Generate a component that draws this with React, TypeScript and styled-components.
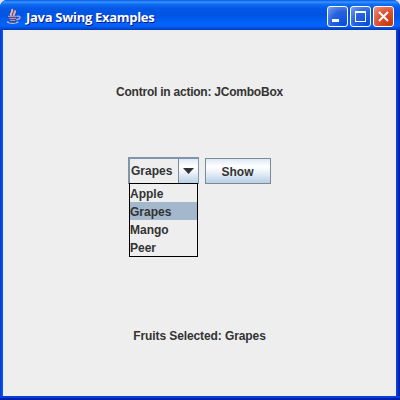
import React from "react";
import styled, { createGlobalStyle } from "styled-components";

const GlobalStyle = createGlobalStyle`
  * { box-sizing: border-box; }
  html, body { margin: 0; padding: 0; }
  body { background: #dfe3ee; overflow: hidden; }
`;

const Frame = styled.main`
  width: 400px;
  height: 400px;
  display: flex;
  flex-direction: column;
  padding: 0 4px 4px 3px;
  border-radius: 7px 7px 0 0;
  overflow: hidden;
  background: linear-gradient(90deg, #0831d9 0, #0855ea 2px, #0a55ea 50%, #0a3fd0 calc(100% - 3px), #0016a8 100%);
  box-shadow: inset 0 -2px 0 #0020b0, inset 0 -4px 0 #0740d8;
  font: bold 12px/18px "Liberation Sans", Arial, sans-serif;
  color: #333;
`;

const TitleBar = styled.header`
  flex: 0 0 30px;
  margin: 0 -4px 0 -3px;
  padding: 3px 6px 0 6px;
  display: flex;
  align-items: center;
  background: linear-gradient(180deg, #0058e6 0, #3a93ff 2px, #1270f4 4px, #0659e6 8px, #0054e3 15px, #0260f6 22px, #0263fb 26px, #004fdb 28px, #0039b8 30px);
`;

const Title = styled.h1`
  flex: 1;
  margin: 1px 0 0 4px;
  font: bold 13px/20px "Open Sans", "Noto Sans", sans-serif;
  letter-spacing: -0.3px;
  color: #fff;
  text-shadow: 1px 1px 0 #0a1883;
  white-space: nowrap;
`;

const Controls = styled.div`
  display: flex;
  gap: 2px;
`;

const ControlButton = styled.button<{ $danger?: boolean }>`
  width: 21px;
  height: 21px;
  padding: 0;
  display: flex;
  border: 1px solid #fff;
  border-radius: 3px;
  background: ${(p) =>
    p.$danger
      ? "radial-gradient(circle at 85% 90%, #c93706 0, #df5231 55%, #ed9883 100%)"
      : "radial-gradient(circle at 85% 90%, #0a4fe0 0, #2962df 55%, #7aa0f0 100%)"};
  svg { display: block; }
`;

const Content = styled.section`
  flex: 1;
  display: grid;
  grid-template-rows: repeat(3, 122px);
  background: #eee;
`;

const Label = styled.p<{ $spacing: string }>`
  margin: 0;
  padding-top: 2px;
  place-self: center;
  letter-spacing: ${(p) => p.$spacing};
  white-space: nowrap;
`;

const ControlPanel = styled.div`
  display: flex;
  justify-content: center;
  align-items: flex-start;
  gap: 6px;
  padding-top: 5px;
`;

const ComboWrap = styled.div`
  position: relative;
  width: 71px;
`;

const Combo = styled.div`
  height: 27px;
  display: flex;
  border: 2px solid #7f95ae;
  border-right-width: 1px;
  border-bottom-width: 1px;
  background: #eee;
`;

const ComboValue = styled.span`
  flex: 1;
  padding-left: 1px;
  line-height: 24px;
`;

const ComboArrow = styled.span`
  width: 20px;
  display: flex;
  border-left: 1px solid #7a8a99;
  background: linear-gradient(180deg, #dfe9f4 0, #fff 30%, #f4f8fc 50%, #b8cfe5 100%);
`;

const Popup = styled.ul`
  position: absolute;
  z-index: 1;
  top: 26px;
  left: 1px;
  width: 69px;
  margin: 0;
  padding: 0;
  border: 1px solid #000;
  background: #eee;
  list-style: none;
`;

const Option = styled.li<{ $selected: boolean }>`
  height: 18px;
  padding-top: 1px;
  line-height: 18px;
  background: ${(p) => (p.$selected ? "#a3b8cc" : "transparent")};
`;

const ShowButton = styled.button`
  width: 66px;
  height: 26px;
  margin-top: 1px;
  padding: 1px 1px 0 0;
  border: 1px solid #7a8a99;
  background: linear-gradient(180deg, #dde8f3 0, #fff 30%, #f0f5fa 50%, #b8cfe5 100%);
  font: inherit;
  color: #333;
`;

const JavaIcon = () => (
  <svg width="16" height="17" viewBox="0 0 16 17" fill="none">
    <path d="M5.4 7.6C3 5.3 8 4.3 5.8 1M8.3 7.8C6.2 6 10.3 5 8.8 2.4" stroke="#f3b3a2" strokeWidth="1.9" />
    <path d="M6.8 7.5C5.2 5.6 9 4.3 7.2 2" stroke="#a4523f" strokeWidth="0.8" />
    <path d="M2.4 8H10.6L9.5 12.8H4Z" fill="#43346f" />
    <path d="M2 8.3H10.6M3.2 10.3H10M4 12.3H9.3" stroke="#c7bbd8" strokeWidth="0.9" />
    <path d="M10.8 8.4C15.5 7.2 15.2 11.2 10.2 11.6" stroke="#b9add3" strokeWidth="1.3" />
    <path d="M1 13.8C4 15.6 9 15.6 12.4 13.8" stroke="#d0b9c8" strokeWidth="1.5" />
    <path d="M3 14H10" stroke="#43346f" strokeWidth="0.9" />
  </svg>
);

const fruits = ["Apple", "Grapes", "Mango", "Peer"];
const selected = "Grapes";

export default function App() {
  return (
    <>
      <GlobalStyle />
      <Frame>
        <TitleBar>
          <JavaIcon />
          <Title>Java Swing Examples</Title>
          <Controls>
            <ControlButton aria-label="Minimize">
              <svg width="19" height="19"><path d="M4 12h7v3H4z" fill="#fff" /></svg>
            </ControlButton>
            <ControlButton aria-label="Maximize">
              <svg width="19" height="19"><path d="M4 4h11v11H4zM5 6v8h9V6z" fill="#fff" fillRule="evenodd" /></svg>
            </ControlButton>
            <ControlButton $danger aria-label="Close">
              <svg width="19" height="19"><path d="M5 5l9 9M14 5l-9 9" stroke="#fff" strokeWidth="2.1" /></svg>
            </ControlButton>
          </Controls>
        </TitleBar>
        <Content>
          <Label $spacing="-0.23px">Control in action: JComboBox</Label>
          <ControlPanel>
            <ComboWrap>
              <Combo>
                <ComboValue>{selected}</ComboValue>
                <ComboArrow>
                  <svg width="19" height="24"><path d="M4 9h11l-5.5 6z" fill="#333" /></svg>
                </ComboArrow>
              </Combo>
              <Popup>
                {fruits.map((fruit) => (
                  <Option key={fruit} $selected={fruit === selected}>{fruit}</Option>
                ))}
              </Popup>
            </ComboWrap>
            <ShowButton>Show</ShowButton>
          </ControlPanel>
          <Label $spacing="-0.1px">Fruits Selected: {selected}</Label>
        </Content>
      </Frame>
    </>
  );
}
